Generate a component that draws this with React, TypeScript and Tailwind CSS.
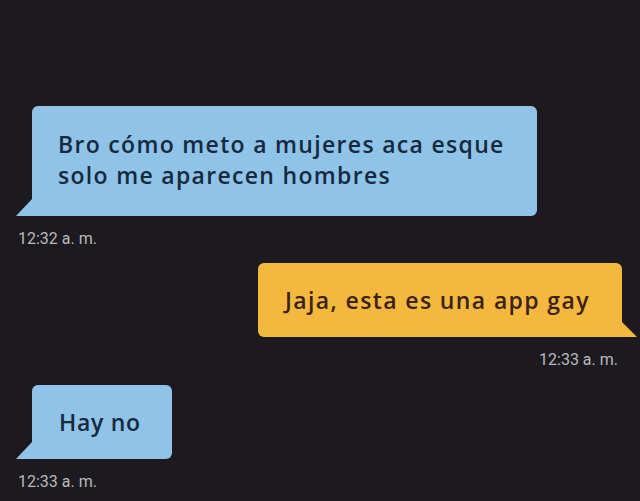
import React from "react";

const font = { fontFamily: '"Open Sans", "Noto Sans", sans-serif' };
const tsFont = { fontFamily: 'Roboto, "Liberation Sans", sans-serif' };

function TailLeft({ color }: { color: string }) {
  return (
    <svg className="absolute left-[-16px] bottom-0" width="17" height="17" viewBox="0 0 17 17">
      <polygon points="16,0 17,0 17,17 0,17" fill={color} />
    </svg>
  );
}

function TailRight({ color }: { color: string }) {
  return (
    <svg className="absolute right-[-15px] bottom-0" width="16" height="15" viewBox="0 0 16 15">
      <polygon points="0,0 1,0 16,15 0,15" fill={color} />
    </svg>
  );
}

export default function App() {
  return (
    <div className="w-[640px] h-[501px] bg-[#1c1a1f] flex flex-col pt-[106px] overflow-hidden">
      {/* message 1 */}
      <div className="pl-[32px]">
        <div className="relative w-[505px] h-[110px] bg-[#8fc3e7] rounded-[6px] rounded-bl-none flex items-center pl-[26px]">
          <TailLeft color="#8fc3e7" />
          <p style={font} className="text-[23px] leading-[31px] font-semibold text-[#16293d] tracking-[0.057em] -mt-[2px] whitespace-nowrap">
            Bro cómo meto a mujeres aca esque
            <br />
            solo me aparecen hombres
          </p>
        </div>
      </div>
      <div style={tsFont} className="pl-[18px] mt-[14px] text-[16px] leading-[18px] text-[#b9b8bd]">
        12:32 a. m.
      </div>

      {/* message 2 */}
      <div className="flex justify-end pr-[18px] mt-[15px]">
        <div className="relative w-[364px] h-[74px] bg-[#f5b83f] rounded-[6px] rounded-br-none flex items-center pl-[27px]">
          <TailRight color="#f5b83f" />
          <p style={font} className="text-[23px] leading-[30px] font-semibold text-[#3a2312] tracking-[0.06em] whitespace-nowrap">
            Jaja, esta es una app gay
          </p>
        </div>
      </div>
      <div style={tsFont} className="flex justify-end pr-[22px] mt-[14px] text-[16px] leading-[18px] text-[#b9b8bd]">
        12:33 a. m.
      </div>

      {/* message 3 */}
      <div className="pl-[32px] mt-[16px]">
        <div className="relative w-[140px] h-[74px] bg-[#8fc3e7] rounded-[6px] rounded-bl-none flex items-center pl-[27px]">
          <TailLeft color="#8fc3e7" />
          <p style={font} className="text-[23px] leading-[30px] font-semibold text-[#16293d] tracking-[0.03em] whitespace-nowrap">
            Hay no
          </p>
        </div>
      </div>
      <div style={tsFont} className="pl-[18px] mt-[14px] text-[16px] leading-[18px] text-[#b9b8bd]">
        12:33 a. m.
      </div>
    </div>
  );
}
